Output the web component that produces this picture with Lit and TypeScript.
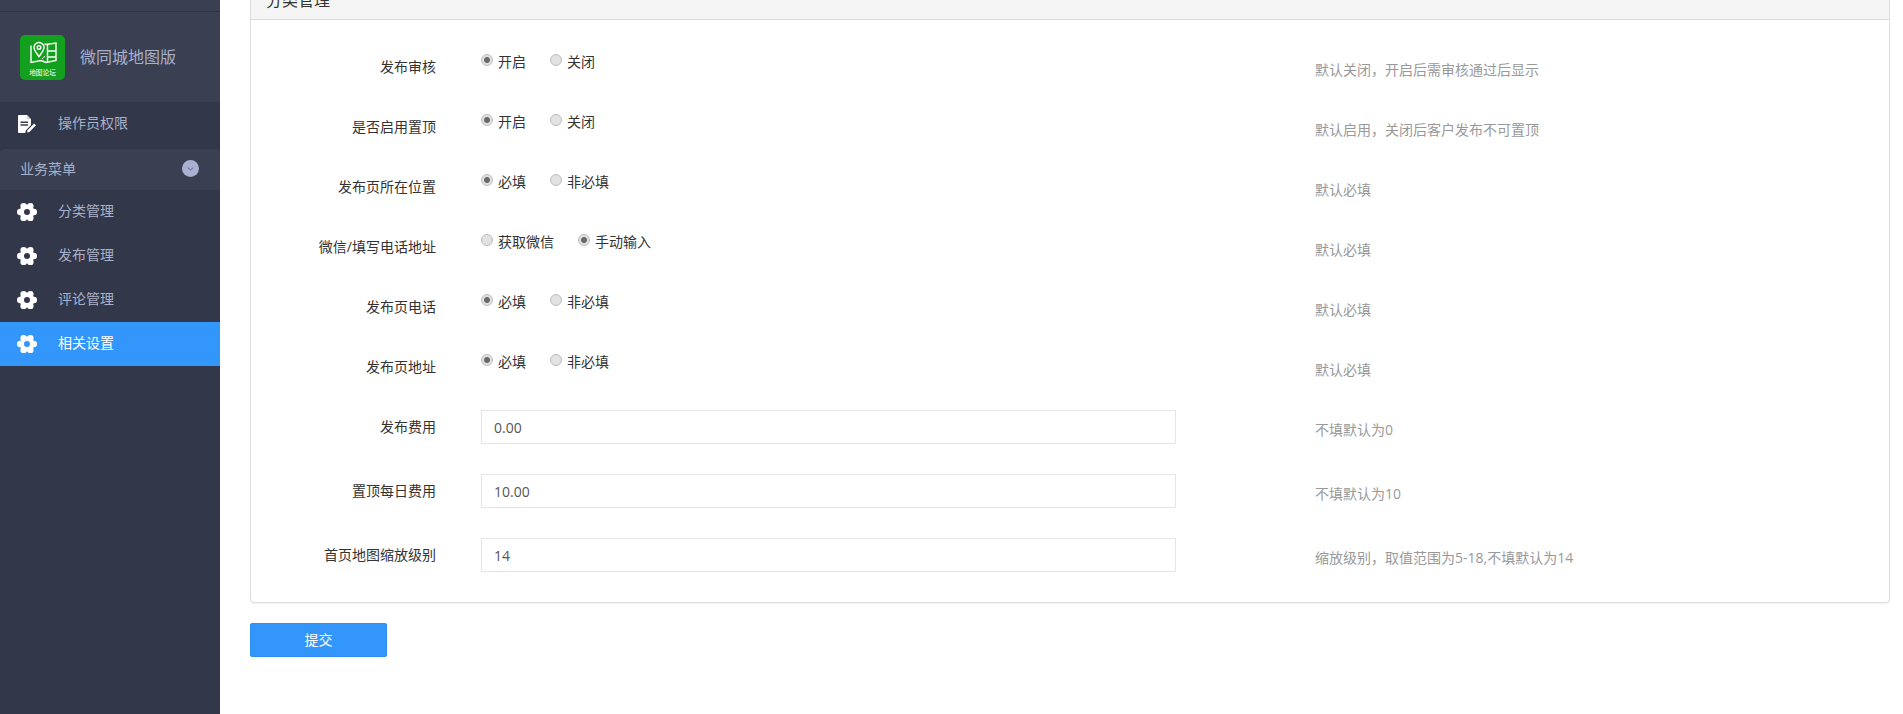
import { LitElement, html, css, svg } from "lit";
import { customElement } from "lit/decorators.js";

type Row =
  | { label: string; hint: string; radios: [string, string]; checked: 0 | 1 }
  | { label: string; hint: string; value: string };

const ROWS: Row[] = [
  { label: "发布审核", hint: "默认关闭，开启后需审核通过后显示", radios: ["开启", "关闭"], checked: 0 },
  { label: "是否启用置顶", hint: "默认启用，关闭后客户发布不可置顶", radios: ["开启", "关闭"], checked: 0 },
  { label: "发布页所在位置", hint: "默认必填", radios: ["必填", "非必填"], checked: 0 },
  { label: "微信/填写电话地址", hint: "默认必填", radios: ["获取微信", "手动输入"], checked: 1 },
  { label: "发布页电话", hint: "默认必填", radios: ["必填", "非必填"], checked: 0 },
  { label: "发布页地址", hint: "默认必填", radios: ["必填", "非必填"], checked: 0 },
  { label: "发布费用", hint: "不填默认为0", value: "0.00" },
  { label: "置顶每日费用", hint: "不填默认为10", value: "10.00" },
  { label: "首页地图缩放级别", hint: "缩放级别，取值范围为5-18,不填默认为14", value: "14" },
];

const MENU = ["分类管理", "发布管理", "评论管理", "相关设置"];

const gear = html`<svg class="icon" viewBox="0 0 20 20" width="20" height="20" aria-hidden="true">
  ${[0, 60, 120, 180, 240, 300].map((a) => {
    const r = (a * Math.PI) / 180;
    return svg`<circle cx=${10 + 6.8 * Math.cos(r)} cy=${10 + 6.8 * Math.sin(r)} r="3.2" fill="#fff"></circle>`;
  })}
  <circle cx="10" cy="10" r="5.2" fill="none" stroke="#fff" stroke-width="4.4"></circle>
</svg>`;

const doc = html`<svg class="icon" viewBox="0 0 20 20" width="20" height="20" aria-hidden="true">
  <path d="M1.800 1h8L14 5.400V11l-5.200 5.600-.6 2.400H1.800a.8.8 0 0 1-.8-.8V1.800A.8.8 0 0 1 1.800 1z" fill="#fff"></path>
  <path d="M10 1l4 4.200h-3.200a.8.8 0 0 1-.8-.8z" fill="#d5d8e2"></path>
  <path d="M3.500 8.200h7.500M3.500 11h7.500" stroke="#3a3f51" stroke-width="1.500"></path>
  <path d="M10 18.600l.5-2.300 6.600-6.900 1.900 1.800-6.600 6.900z" fill="#fff"></path>
</svg>`;

const logo = html`<svg class="logo" viewBox="0 0 45 45" width="45" height="45" aria-hidden="true">
  <rect width="45" height="45" rx="5" fill="#14a01f"></rect>
  <g fill="none" stroke="#fff" stroke-width="1.400">
    <path d="M11 10.500V27.500L21 25.500L26 27.500L36 25.500V8L26 9.500L24.500 9"></path>
    <path d="M27.500 9.500V27M27.500 16H36M27.500 22H36"></path>
    <path d="M19 21.500c-3-4-5-6.300-5-9a5 5 0 0 1 10 0c0 2.700-2 5-5 9z" fill="#14a01f"></path>
    <circle cx="19" cy="12.500" r="1.800"></circle>
    <path d="M22 24l3-3" stroke-width="1"></path>
  </g>
  <text x="22.500" y="40" text-anchor="middle" class="logotext">地图论坛</text>
</svg>`;

@customElement("app-root")
export class AppRoot extends LitElement {
  static styles = css`
    :host {
      display: block;
      height: 100vh;
      overflow: hidden;
      background: #fff;
      font-family: "Open Sans", "Noto Sans CJK SC", sans-serif;
      font-size: 14px;
      line-height: 20px;
      color: #333;
    }
    .layout { display: flex; height: 100%; }
    .side { flex: 0 0 220px; background: #323749; color: #a9b1c9; }
    .strip { height: 11px; background: #3a3f51; border-bottom: 1px solid #2f3445; }
    .brand {
      height: 90px;
      background: #3a3f51;
      display: flex;
      align-items: center;
      padding-left: 20px;
      gap: 15px;
      font-size: 16px;
      box-sizing: border-box;
    }
    .logo { display: block; flex: none; margin-top: 1px; }
    .logotext { font-size: 6.7px; fill: #fff; }
    .item {
      height: 44px;
      display: flex;
      align-items: center;
      padding-left: 17px;
      gap: 21px;
    }
    .item span { margin-bottom: 2px; }
    .item.tall { height: 47px; box-sizing: border-box; padding-bottom: 3px; }
    .item.active { background: #3296fa; color: #fff; }
    .icon { display: block; flex: none; }
    .group {
      height: 41px;
      box-sizing: border-box;
      background: #3a3f51;
      border-radius: 4px 4px 0 0;
      display: flex;
      align-items: center;
      justify-content: space-between;
      padding: 0 21px 2px 20px;
    }
    .chev { display: block; }
    .main { flex: 1; min-width: 0; padding: 0 13px 0 30px; }
    .panel {
      margin-top: -21px;
      border: 1px solid #ddd;
      border-radius: 4px;
      background: #fff;
      box-shadow: 0 1px 1px rgba(0, 0, 0, 0.05);
    }
    .head {
      height: 40px;
      box-sizing: border-box;
      padding: 10px 15px;
      background: #f5f5f5;
      border-bottom: 1px solid #ddd;
      font-size: 16px;
    }
    .body { padding: 30px 0; }
    .row { display: grid; grid-template-columns: 185px 695px 1fr; column-gap: 45px; }
    .row.radio { height: 60px; }
    .row.text { height: 64px; }
    .row.text:last-child { height: 34px; }
    .label { padding-top: 7px; text-align: right; }
    .hint { padding: 10px 0 0 94px; color: #999; }
    .radios { display: flex; padding-top: 2px; gap: 24px; }
    .radios label { display: flex; gap: 5px; align-items: flex-start; }
    .radios input {
      appearance: none;
      -webkit-appearance: none;
      width: 12px;
      height: 12px;
      margin: 2px 0 0;
      border-radius: 50%;
      border: 1px solid #bdbdbd;
      background: #e2e2e2;
      box-sizing: border-box;
      flex: none;
    }
    .radios input:checked {
      background: radial-gradient(circle, #6a6a6a 0 2.6px, #e2e2e2 3.4px);
    }
    .field {
      display: block;
      width: 100%;
      height: 34px;
      box-sizing: border-box;
      border: 1px solid #e5e5e5;
      padding: 6px 12px;
      font: inherit;
      color: #555;
      background: #fff;
      outline: none;
    }
    .submit {
      display: block;
      margin-top: 20px;
      width: 137px;
      height: 34px;
      border: 1px solid #2d8fef;
      border-radius: 2px;
      background: #3296fa;
      color: #fff;
      font: inherit;
      padding: 0;
    }
  `;

  private renderRow(r: Row, i: number) {
    return html`<div class="row ${"value" in r ? "text" : "radio"}">
      <div class="label">${r.label}</div>
      ${"value" in r
        ? html`<input class="field" type="text" .value=${r.value} />`
        : html`<div class="radios">
            ${r.radios.map(
              (t, n) => html`<label><input type="radio" name="r${i}" ?checked=${n === r.checked} />${t}</label>`
            )}
          </div>`}
      <div class="hint">${r.hint}</div>
    </div>`;
  }

  render() {
    return html`<div class="layout">
      <aside class="side">
        <div class="strip"></div>
        <div class="brand">${logo}<span>微同城地图版</span></div>
        <div class="item tall">${doc}<span>操作员权限</span></div>
        <div class="group">
          <span>业务菜单</span>
          <svg class="chev" viewBox="0 0 17 17" width="17" height="17" aria-hidden="true">
            <circle cx="8.500" cy="8.500" r="8.500" fill="#a9b1d3"></circle>
            <path d="M5.800 7.500l2.700 2.500 2.700-2.500" fill="none" stroke="#5a6078" stroke-width="1"></path>
          </svg>
        </div>
        ${MENU.map(
          (m, i) => html`<div class="item ${i === 3 ? "active" : ""}">${gear}<span>${m}</span></div>`
        )}
      </aside>
      <main class="main">
        <section class="panel">
          <div class="head">分类管理</div>
          <div class="body">${ROWS.map((r, i) => this.renderRow(r, i))}</div>
        </section>
        <button class="submit" type="button">提交</button>
      </main>
    </div>`;
  }
}
